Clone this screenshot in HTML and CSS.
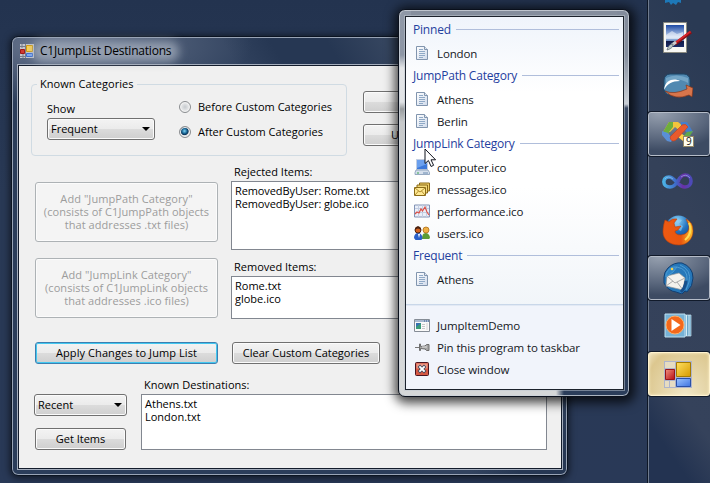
FILE: index.html
```html
<!DOCTYPE html>
<html lang="en">
<head>
<meta charset="utf-8">
<title>C1JumpList Destinations</title>
<link rel="stylesheet" href="styles.css">
</head>
<body>
<svg class="defs" width="0" height="0">
  <defs>
    <linearGradient id="gDoc" x1="0" y1="0" x2="1" y2="1"><stop offset="0" stop-color="#fff"/><stop offset="1" stop-color="#cfdaeb"/></linearGradient>
    <linearGradient id="gYellow" x1="0" y1="0" x2="1" y2="1"><stop offset="0" stop-color="#ffe060"/><stop offset="1" stop-color="#d79a00"/></linearGradient>
    <linearGradient id="gRed" x1="0" y1="0" x2="1" y2="1"><stop offset="0" stop-color="#f09080"/><stop offset="1" stop-color="#b80d10"/></linearGradient>
    <linearGradient id="gBlue" x1="0" y1="0" x2="1" y2="1"><stop offset="0" stop-color="#9cc4ff"/><stop offset="1" stop-color="#3f73e0"/></linearGradient>
    <linearGradient id="gSky" x1="0" y1="0" x2="0" y2="1"><stop offset="0" stop-color="#1d49a4"/><stop offset=".55" stop-color="#c4d8f2"/><stop offset=".72" stop-color="#6d8fc4"/><stop offset=".75" stop-color="#101a48"/><stop offset="1" stop-color="#1b2c68"/></linearGradient>
    <linearGradient id="gInf" x1="0" y1="0" x2="1" y2="0"><stop offset="0" stop-color="#4bb0e4"/><stop offset=".45" stop-color="#3e68c8"/><stop offset=".7" stop-color="#6a2fa6"/><stop offset="1" stop-color="#4c4ab8"/></linearGradient>
    <linearGradient id="gFox" x1="0" y1="0" x2="1" y2="0"><stop offset="0" stop-color="#ef5a12"/><stop offset=".6" stop-color="#e8560f"/><stop offset="1" stop-color="#ffc22a"/></linearGradient>
    <radialGradient id="gGlobe" cx=".45" cy=".2" r=".8"><stop offset="0" stop-color="#8fd6f8"/><stop offset=".5" stop-color="#2474c0"/><stop offset="1" stop-color="#123a80"/></radialGradient>
    <symbol id="doc" viewBox="0 0 12 14"><path d="M.5.5h8l3 3v10h-11z" fill="url(#gDoc)" stroke="#8195ae"/><path d="M8.5.5v3h3" fill="#dfe8f2" stroke="#8195ae"/><path d="M3 3.5h4M3 5.5h6M3 7.5h6M3 9.5h6M3 11.5h4" stroke="#8fa9c6"/></symbol>
    <symbol id="form" viewBox="0 0 28 27"><path d="M0 0h28v27H0z" fill="#aeb4cb"/><path d="M1 1h10v6H1zM1 20h4v6H1zM6 20h5v6H6z" fill="#e6dcc2"/><path d="M1.5 8.5h9v10h-9z" fill="url(#gRed)" stroke="#98131a"/><path d="M12.500 1.500h14v14h-14z" fill="url(#gYellow)" stroke="#a57b00"/><path d="M12.500 17.500h14v8h-14z" fill="url(#gBlue)" stroke="#2950a8"/></symbol>
  </defs>
</svg>

<main class="window">
  <header class="titlebar">
    <svg width="14" height="14" viewBox="0 0 14 14"><path d="M0 0h14v14H0z" fill="#c4c7ce"/><path d="M2 0v4M0 2.500h5M3 10v4M0 12.500h5M5.500 0v14" stroke="#777d8b"/><path d="M.5 5.500h4v4h-4z" fill="#cf3a30" stroke="#a01818"/><path d="M6.500 1.500h6v6h-6z" fill="#ffd34c" stroke="#d29a08"/><path d="M6.500 9.500h6v3h-6z" fill="#7aa8f8" stroke="#3468d0"/></svg>
    <h1>C1JumpList Destinations</h1>
  </header>
  <section class="client">
    <div class="row row-options">
      <fieldset>
        <legend>Known Categories</legend>
        <div class="show">
          <label>Show</label>
          <div class="select"><span>Frequent</span><i></i></div>
        </div>
        <div class="radios">
          <label><b class="radio"></b><span>Before Custom Categories</span></label>
          <label><b class="radio on"></b><span>After Custom Categories</span></label>
        </div>
      </fieldset>
      <div class="side">
        <div class="btn"></div>
        <div class="btn">U</div>
      </div>
    </div>
    <div class="row row-lists">
      <div class="adders">
        <div class="btn disabled"><span>Add "JumpPath Category"</span><span>(consists of C1JumpPath objects</span><span>that addresses .txt files)</span></div>
        <div class="btn disabled"><span>Add "JumpLink Category"</span><span>(consists of C1JumpLink objects</span><span>that addresses .ico files)</span></div>
      </div>
      <div class="lists">
        <label>Rejected Items:</label>
        <div class="list rejected"><span>RemovedByUser: Rome.txt</span><span>RemovedByUser: globe.ico</span></div>
        <label>Removed Items:</label>
        <div class="list removed"><span>Rome.txt</span><span>globe.ico</span></div>
      </div>
    </div>
    <div class="row row-actions">
      <div class="btn primary">Apply Changes to Jump List</div>
      <div class="btn clear">Clear Custom Categories</div>
    </div>
    <div class="row row-known">
      <div class="getters">
        <div class="select"><span>Recent</span><i></i></div>
        <div class="btn">Get Items</div>
      </div>
      <div class="known">
        <label>Known Destinations:</label>
        <div class="list"><span>Athens.txt</span><span>London.txt</span></div>
      </div>
    </div>
  </section>
</main>

<aside class="jump">
  <div class="jump-body">
    <div class="jump-main">
      <h2>Pinned</h2>
      <p><svg width="12" height="14"><use href="#doc"/></svg><span>London</span></p>
      <h2>JumpPath Category</h2>
      <p><svg width="12" height="14"><use href="#doc"/></svg><span>Athens</span></p>
      <p><svg width="12" height="14"><use href="#doc"/></svg><span>Berlin</span></p>
      <h2>JumpLink Category</h2>
      <p><svg width="16" height="16" viewBox="0 0 16 16"><path d="M2.500.5h11v10h-11z" fill="#3b78da" stroke="#c3cfe2"/><path d="M3 1h10v4L3 9z" fill="#6ba0ee"/><path d="M2 11h12l1.500 2.500v2H1v-2z" fill="#d5dfec" stroke="#8298b5" stroke-width=".8"/><path d="M3 14h2" stroke="#39a84a"/><path d="M9 14h5" stroke="#6b8bb0"/></svg><span>computer.ico</span></p>
      <p><svg width="16" height="14" viewBox="0 0 16 14"><path d="M5.500 1h10v8h-10z" fill="#f0cf69" stroke="#8a6a18"/><path d="M3 3h10.500v8H3z" fill="#f4d977" stroke="#8a6a18"/><path d="M.5 5.500h11v8H.5z" fill="#ffe993" stroke="#8a6a18"/><path d="M1 6l5 4 5-4M1 13l3.500-4M11 13L7.500 9" fill="none" stroke="#b18c2c"/></svg><span>messages.ico</span></p>
      <p><svg width="16" height="14" viewBox="0 0 16 14"><path d="M.5 1h15v12H.5z" fill="#e9eef8" stroke="#8293b5"/><path d="M4.500 1v12M8.500 1v12M12.500 1v12M1 4.500h14M1 8.500h14" stroke="#c3cde2"/><path d="M1 10l2-2 2 1 2-4 1.500 2L11 3l2 5 2 3" fill="none" stroke="#dc5147" stroke-width="1.200"/></svg><span>performance.ico</span></p>
      <p><svg width="16" height="14" viewBox="0 0 16 14"><path d="M8 13c0-4 1-6 3.500-6S16 9 16 12l-1 1z" fill="#5b9c35"/><circle cx="12" cy="4" r="3" fill="#eeb045" stroke="#b06c14" stroke-width=".8"/><path d="M0 12c0-3 1.500-5 4-5s4.500 2 4.500 5l-1 2h-6z" fill="#2b60c8"/><path d="M4 8l1 4 1-4z" fill="#fff"/><circle cx="4" cy="4" r="3" fill="#d4621e" stroke="#54260d"/><path d="M1 4c0-5 6-5 6 0-2-2-4-2-6 0z" fill="#4b2312"/></svg><span>users.ico</span></p>
      <h2>Frequent</h2>
      <p><svg width="12" height="14"><use href="#doc"/></svg><span>Athens</span></p>
    </div>
    <div class="jump-tasks">
      <p><svg width="16" height="13" viewBox="0 0 16 13"><path d="M.5.5h15v12H.5z" fill="#fafafa" stroke="#858c96"/><path d="M1 2h14" stroke="#a9bad0" stroke-width="2"/><path d="M10 2h1m1 0h1m1 0h1" stroke="#355a90"/><path d="M2 4h5v6H2z" fill="#399b7a"/><path d="M2 4h5L2 8z" fill="#3670b4"/><path d="M8 5.500h3M8 7.500h3M8 9.500h3" stroke="#c8c8c8"/><path d="M13 4v7" stroke="#d4d4d4"/></svg><span>JumpItemDemo</span></p>
      <p><svg width="16" height="8" viewBox="0 0 16 8"><path d="M1 4.500h5" stroke="#777"/><path d="M5.500 1h1v2.500L11 3l1.500-1.500h2.500v6h-2.500L11 6l-4.500-.5v2h-1z" fill="#a5a5a5" stroke="#6e6e6e"/><path d="M8 4h5" stroke="#e2e2e2"/></svg><span>Pin this program to taskbar</span></p>
      <p><svg width="14" height="14" viewBox="0 0 14 14"><rect x=".5" y=".5" width="13" height="13" rx="1" fill="#d65843" stroke="#4a1420"/><path d="M1.500 1.500h11v5h-11z" fill="#ec9784"/><path d="M5 5l4 4M9 5L5 9" stroke="#40465c" stroke-width="3.400" stroke-linecap="square"/><path d="M5 5l4 4M9 5L5 9" stroke="#fff" stroke-width="1.800" stroke-linecap="square"/></svg><span>Close window</span></p>
    </div>
  </div>
</aside>

<nav class="taskbar">
  <div class="slot"><svg width="24" height="30" viewBox="0 0 24 30"><path d="M2 20l20 0 1 5-3 0 0 3-3-1-2 3-3-2-2 2-2-3-4 1 0-3-3-1z" fill="#1d78b8"/></svg></div>
  <div class="slot"><svg width="32" height="32" viewBox="0 0 32 32"><path d="M1.500.5h23v30h-23z" fill="#f8f8f4" stroke="#8a8a80"/><path d="M4 3h18v22H4z" fill="url(#gSky)"/><path d="M4 13l6-4 5 3 6-2v7H4z" fill="#fff" opacity=".5"/><path d="M29 10L13 22" stroke="#861015" stroke-width="3.400"/><path d="M28.500 9.500L13 21" stroke="#d8262c" stroke-width="1.800"/><path d="M14 20l-4 3" stroke="#ccc" stroke-width="3"/><path d="M11 22c0 4-3 5-6 6 1-3 2-6 6-6z" fill="#b8c4c8" stroke="#59666b" stroke-width=".7"/></svg></div>
  <div class="slot"><svg width="30" height="26" viewBox="0 0 30 26"><rect x="1" y="1" width="26" height="21" rx="6" fill="#5189b1" stroke="#1d4464"/><path d="M3 5q10-5 22 0v5Q12 2 3 12z" fill="#8ab8d4" opacity=".6"/><path d="M1 17C2 6 12 5 17 8 9 8 4 11 1 17z" fill="#fff"/><path d="M2 18q9 4 22-2l-1-4 7 3-1 9-3-2Q12 28 2 18z" fill="#d8754b" stroke="#85351a" stroke-width=".7"/></svg></div>
  <div class="slot open"><svg width="32" height="26" viewBox="0 0 32 26"><path d="M7 1h9l6 5-4 4-5-4-5 5-7 0z" fill="#f3c43c"/><path d="M1 11l6-10 4 0 0 5-4 5 0 3z" fill="#6eae3c"/><path d="M0 10l6 2 5 6-2 3-4-1-5-6z" fill="#5a8fd6"/><path d="M19 1h6l6 10-5 2-7-8z" fill="#457fcb"/><path d="M31 10l-5 8-4 2-2-3 5-6z" fill="#61a84a"/><path d="M19 12l8 7-6 1-5-4z" fill="#ffd347"/><path d="M8 16L20 4q4-2 6 2L14 19q-5 3-6-3z" fill="#e95a2c" stroke="#c83c18" stroke-width=".6"/><rect x="21.500" y="15.500" width="10" height="10" fill="#fffef0" stroke="#948866"/><text class="badge" x="24" y="24">9</text></svg></div>
  <div class="slot"><svg width="32" height="18" viewBox="0 0 32 18"><path d="M17 7C13 13 11 14 8 14 0 14 0 4 7 4c6 0 9 10 16 10 8 0 8-12 0-12-5 0-6 5-9 9" fill="none" stroke="url(#gInf)" stroke-width="3.600"/><path d="M3 6q3-4 8 0m8-2q5-4 9 1" fill="none" stroke="#a7d2f4" opacity=".55"/></svg></div>
  <div class="slot"><svg width="32" height="32" viewBox="0 0 32 32"><circle cx="16.500" cy="14.500" r="13" fill="url(#gGlobe)"/><path d="M11 9q4-5 9-3l-3 4 4 2-2 5-5-2z" fill="#95cdf0" opacity=".6"/><path d="M3 6l4 2q3-4 8-3l-3 4 1 4 6-1-3 4-3 1q0 4 6 4 9-1 8-10l-3-6q7 3 7 12c0 8-6 14-14 14C7 31 1 25 1 18 1 13 2 9 3 6z" fill="url(#gFox)" stroke="#bd3e08" stroke-width=".6"/><path d="M27 9q4 10-4 17" fill="none" stroke="#ffdb55" stroke-width="2"/></svg></div>
  <div class="slot open"><svg width="32" height="32" viewBox="0 0 32 32"><path d="M6 6Q12 0 20 1q11 4 11 15 0 8-6 14l-2-1-3 3-6-2q-8-1-12-9L2 15q0-5 4-9z" fill="#2677b9" stroke="#123f72"/><path d="M5 14l12-3 6 5-2 12-17-4z" fill="#f4f2ed" stroke="#999" stroke-width=".7"/><path d="M5 14l8 7 10-5M4 24l7-5M21 28l-6-8" fill="none" stroke="#aaa"/><path d="M4 12q3-8 11-7l-4 5-7 5z" fill="#2f86c8"/><path d="M4 12q3-8 11-7l-4 5-7 5zM18 3q12 5 9 17l-3 8M15 5q11 2 10 13" fill="none" stroke="#4d9bd2"/><path d="M24 19q-1 7-5 11" fill="none" stroke="#174f8c" stroke-width="3"/><circle cx="10" cy="7" r="1.300" fill="#f4d14c"/></svg></div>
  <div class="slot"><svg width="28" height="26" viewBox="0 0 28 26"><path d="M20 2h7v21h-7z" fill="#6aa5c8" stroke="#c8e3ef" stroke-width=".7"/><path d="M22.500 2v21M25 2v21" stroke="#d5edf7"/><path d="M1 1h20v23H1z" fill="#76b2d6" stroke="#bddff0"/><circle cx="11" cy="12" r="9" fill="#f4681b" stroke="#ffae67"/><path d="M7.500 6l9 6-9 6z" fill="#fff"/></svg></div>
  <div class="slot active"><svg width="28" height="27"><use href="#form"/></svg></div>
</nav>

<svg class="cursor" width="13" height="20" viewBox="0 0 13 20"><path d="M1 1v14.500l3.400-3 2.700 6 2.500-1.200-2.600-5.500h4.600z" fill="#fff" stroke="#11151f"/></svg>
</body>
</html>
```

FILE: styles.css
```css
* { box-sizing: border-box; }
body {
  margin: 0;
  width: 710px;
  height: 483px;
  overflow: hidden;
  position: relative;
  background: linear-gradient(#23334f, #293955 40%, #293957);
  font: 11px/13px "Open Sans", "Noto Sans", sans-serif;
  color: #000;
}
.defs { position: absolute; }
h1, h2, p { margin: 0; font-weight: normal; }
span, label, h1, h2, legend { white-space: nowrap; }

/* main window */
.window {
  position: absolute;
  left: 11px;
  top: 36px;
  width: 557px;
  height: 440px;
  padding: 0 4px 0 5px;
  border: 1px solid #0b1422;
  border-radius: 7px;
  background:
    radial-gradient(ellipse 190px 60px at 50px 8px, #6b7890, transparent),
    linear-gradient(60deg, #2b3d5a 0 47%, #32435f 52% 57%, #263753 63% 70%, #35455f 77%);
  box-shadow: inset 0 0 0 1px #98a3b5, 0 1px 7px 1px #0009;
}
.titlebar {
  height: 27px;
  display: flex;
  align-items: center;
  gap: 6px;
  padding-left: 3px;
}
.titlebar h1 {
  position: relative;
  z-index: 0;
  font-size: 12px;
  line-height: 16px;
  letter-spacing: -.2px;
}
.titlebar h1::before {
  content: "";
  position: absolute;
  z-index: -1;
  inset: -2px -8px -3px;
  border-radius: 10px;
  background: #a3adbccc;
  filter: blur(5px);
}
.client {
  width: 546px;
  height: 406px;
  border: 1px solid #a5aebd;
  box-shadow: inset 0 0 0 1px #131c2c;
  padding: 12px 0 0 15px;
  background: #f0f0f0;
}
.row { display: flex; }
.row-options { height: 80px; margin-left: -2px; }
fieldset {
  width: 316px;
  height: 79px;
  margin: 0;
  padding: 0;
  border: 1px solid #d0dbe3;
  border-radius: 4px;
  display: flex;
}
legend { margin-left: 5px; padding: 0 3px; height: 14px; line-height: 14px; letter-spacing: .06px; }
.show { width: 108px; margin: 11px 0 0 15px; display: flex; flex-direction: column; }
.show .select { margin-top: 3px; }
.radios { margin: 9px 0 0 24px; display: flex; flex-direction: column; gap: 12px; }
.radios label { display: flex; align-items: center; gap: 7px; }
.radio {
  width: 12px;
  height: 12px;
  border: 1px solid #8a8d90;
  border-radius: 50%;
  background: radial-gradient(#c6cace, #f3f3f3 75%);
  box-shadow: inset 0 0 0 1px #f4f4f4;
}
.radio.on { background: radial-gradient(circle at 45% 40%, #7fd4f6, #14608f 32%, #0c3357 46%, #d9dde0 56%); }
.select, .btn {
  height: 22px;
  border: 1px solid #707070;
  border-radius: 3px;
  background: linear-gradient(#f3f3f3, #ebebeb 49%, #dcdcdc 50%, #cfcfcf);
  box-shadow: inset 0 0 0 1px #fbfbfb;
}
.select { display: flex; align-items: center; justify-content: space-between; padding: 0 4px 1px 3px; }
.select i { border: 4px solid transparent; border-top-color: #000; border-bottom: 0; }
.btn { display: flex; align-items: center; justify-content: center; padding-bottom: 2px; }
.side { margin: 14px 0 0 16px; display: flex; flex-direction: column; gap: 11px; }
.side .btn { width: 184px; justify-content: flex-start; padding-left: 27px; }
.row-lists { margin: 9px 0 0 2px; height: 153px; }
.adders { padding-top: 16px; display: flex; flex-direction: column; gap: 16px; }
.adders .btn, .primary { width: 183px; }
.btn.disabled {
  height: 60px;
  flex-direction: column;
  background: #f4f4f4;
  border-color: #adb2b5;
  color: #9c9c9c;
  letter-spacing: .07px;
}
.lists { margin-left: 13px; width: 316px; display: flex; flex-direction: column; }
.lists label, .known label { margin-left: 3px; height: 15px; line-height: 12px; }
.list {
  border: 1px solid #828790;
  background: #fff;
  padding: 2px 3px;
  display: flex;
  flex-direction: column;
}
.rejected { height: 69px; margin-bottom: 11px; letter-spacing: -.1px; }
.removed { height: 43px; }
.row-actions { margin: 23px 0 0 2px; gap: 14px; }
.primary { border-color: #3c7fb1; box-shadow: inset 0 0 0 1px #43c8f0; letter-spacing: .08px; }
.clear { width: 148px; }
.row-known { margin: 15px 0 0 1px; }
.getters { width: 93px; padding-top: 15px; display: flex; flex-direction: column; gap: 12px; }
.getters .btn { margin: 0 1px; }
.known { margin-left: 14px; width: 406px; display: flex; flex-direction: column; }
.known .list { height: 56px; }

/* jump list */
.jump {
  position: absolute;
  left: 398px;
  top: 9px;
  width: 232px;
  height: 388px;
  padding: 6px 5px 6px 6px;
  border: 1px solid #0a101c;
  border-radius: 7px;
  background:
    linear-gradient(90deg, #d5d7d8 0 157px, #2b3d5a 165px) 0 100% / 100% 7px no-repeat,
    linear-gradient(#8f98a7 0, #8d96a5 45px, #e4e6e8 58px, #e1e3e5 92px, #999d9f 99px, #c7c9ca 112px, #d8dadb) 0 0 / 12px 100% no-repeat,
    linear-gradient(#838c9c, #858e9d 45px, #cbd0d7 94px, #3d4c66 98px, #2b3d5a 170px) 100% 0 / 12px 100% no-repeat,
    #858e9d;
  box-shadow: inset 0 0 0 1px #ccd2dacc, 1px 2px 11px 4px #000b;
}
.jump-body {
  height: 100%;
  border: 1px solid #1c222c;
  box-shadow: 0 0 0 1px #c0c7d080;
  background: linear-gradient(#eff4fb, #fff 75px, #fff 170px, #f1f5f9 290px);
  font-size: 11.5px;
}
.jump-main { height: 288px; padding: 1px 4px 0 7px; border-bottom: 1px solid #c9d7e9; }
.jump h2 {
  height: 22px;
  margin-bottom: 2px;
  display: flex;
  align-items: center;
  gap: 5px;
  font-size: 12px;
  letter-spacing: -.2px;
  color: #1f409e;
}
.jump h2::after { content: ""; flex: 1; height: 1px; background: #b0bedb; }
.jump p { height: 22px; display: flex; align-items: center; letter-spacing: -.12px; }
.jump p svg { width: 18px; flex: none; }
.jump p span { margin-left: 6px; color: #15181d; }
.jump-tasks { height: 84px; padding: 8px 0 0 7px; background: #f1f4fb; border-top: 1px solid #e2e9f4; }

/* taskbar */
.taskbar {
  position: absolute;
  left: 647px;
  top: 0;
  width: 63px;
  height: 483px;
  overflow: hidden;
  border-left: 1px solid #0e1726;
  box-shadow: inset 1px 0 #6f7b8e;
  background: linear-gradient(55deg, #233351 0 35px, #35425b 75px, #344159 190px, #2a3a54 300px);
  display: flex;
  flex-direction: column;
  gap: 4px;
}
.slot { flex: none; width: 60px; height: 44px; display: flex; align-items: center; justify-content: center; }
.slot:first-child { margin-top: -32px; padding-right: 10px; }
.slot.open, .slot.active { width: 62px; padding-right: 2px; }
.slot.open {
  border: 1px solid #b5bcc8;
  border-radius: 3px;
  box-shadow: 0 0 0 1px #111a2a;
  background: radial-gradient(ellipse 70px 38px at 10px 0, #96a0af, #59667c 70%, transparent), #3d4b63;
}
.slot.active {
  border: 1px solid #fff3cf;
  border-radius: 3px;
  box-shadow: 0 0 0 1px #111a2a, inset 0 0 3px #fff2cf;
  background: radial-gradient(ellipse at 60% 100%, #f0e6c6, #dcc78f 80%, #ede0bb);
}
.badge { font: 10px "Open Sans", sans-serif; fill: #222; }
.cursor { position: absolute; left: 424px; top: 148px; }
```
